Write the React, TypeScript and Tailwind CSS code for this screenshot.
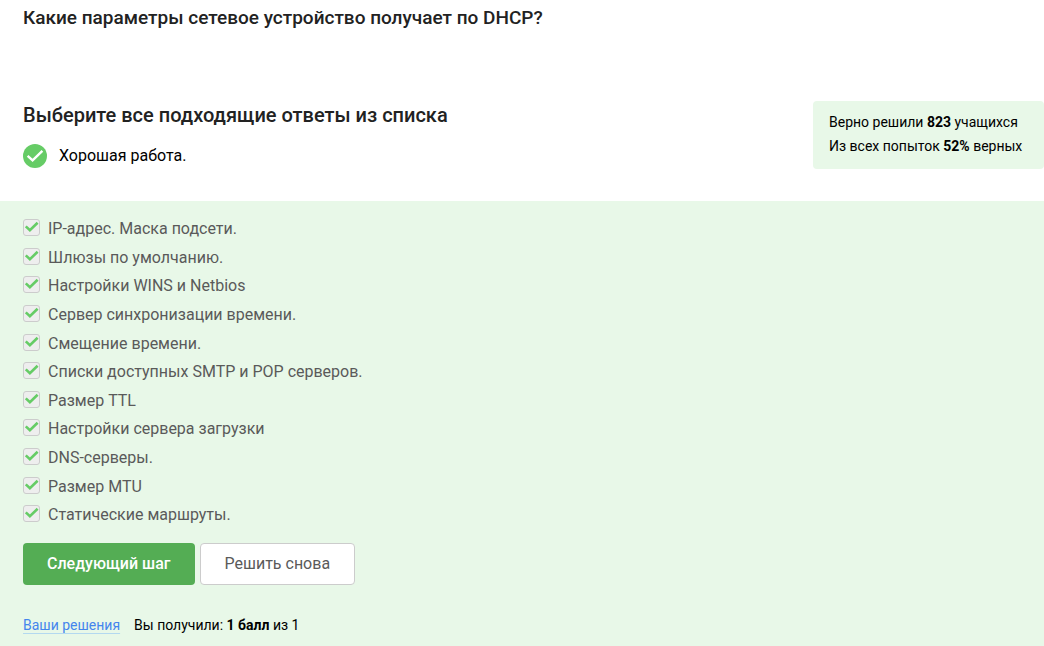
const options: string[] = [
  'IP-адрес. Маска подсети.',
  'Шлюзы по умолчанию.',
  'Настройки WINS и Netbios',
  'Сервер синхронизации времени.',
  'Смещение времени.',
  'Списки доступных SMTP и POP серверов.',
  'Размер TTL',
  'Настройки сервера загрузки',
  'DNS-серверы.',
  'Размер MTU',
  'Статические маршруты.',
];

function Option({ id, label }: { id: string; label: string }) {
  return (
    <li className="flex items-start gap-2">
      <span className="relative mt-1 flex h-[17px] w-[17px] shrink-0">
        <input
          id={id}
          type="checkbox"
          defaultChecked
          disabled
          className="h-full w-full appearance-none rounded-[3px] border border-[#ccc] bg-[#eee]"
        />
        <svg viewBox="0 0 17 17" className="absolute inset-0 h-full w-full" fill="none" aria-hidden="true">
          <path d="M2.8 7.4 6.9 11.3 14.6 3.8" stroke="#66cc66" strokeWidth="2.6" />
        </svg>
      </span>
      <label htmlFor={id} className="text-base leading-7 text-[#5a5a5a]">
        {label}
      </label>
    </li>
  );
}

export default function App() {
  return (
    <main className="flex min-h-screen flex-col bg-white font-[Roboto,sans-serif] text-[#222]">
      <header className="px-[23px] pt-1">
        <h1 className="text-[19px] leading-7 font-medium">Какие параметры сетевое устройство получает по DHCP?</h1>
      </header>

      <section className="mt-[69px] flex justify-between pl-[23px]">
        <div>
          <h2 className="text-xl leading-7 font-medium">Выберите все подходящие ответы из списка</h2>
          <p className="mt-[15px] flex items-center gap-3 text-base leading-6 text-black">
            <svg viewBox="0 0 24 24" className="h-6 w-6" fill="none" aria-hidden="true">
              <circle cx="12" cy="12" r="12" fill="#66cc66" />
              <path d="M4.6 11.8 9.6 16.4 19.4 6.8" stroke="#fff" strokeWidth="2.4" />
            </svg>
            Хорошая работа.
          </p>
        </div>
        <aside className="min-w-[231px] rounded bg-[#e8f8e8] px-4 pt-[9px] pb-[11px] text-sm leading-6 text-black">
          <p>Верно решили <b>823</b> учащихся</p>
          <p>Из всех попыток <b>52%</b> верных</p>
        </aside>
      </section>

      <section className="mt-8 flex-1 bg-[#e8f8e8] px-[23px] pt-[14px]">
        <ul className="grid min-h-[315px] auto-rows-fr">
          {options.map((label, i) => (
            <Option key={label} id={`option-${i}`} label={label} />
          ))}
        </ul>
        <div className="mt-[13px] flex gap-[5px]">
          <button type="button" className="h-[42px] rounded bg-[#54ad54] px-6 text-base font-medium text-white">
            Следующий шаг
          </button>
          <button type="button" className="h-[42px] rounded border border-[#ccc] bg-white px-6 text-base text-[#5a5a5a]">
            Решить снова
          </button>
        </div>
        <footer className="mt-[30px] flex items-start gap-[14px] pb-3 text-sm leading-5 text-black">
          <a
            href="#solutions"
            className="text-[#4485ed] underline decoration-[#b3d9f0] decoration-1 underline-offset-[3px] [text-decoration-skip-ink:none]"
          >
            Ваши решения
          </a>
          <p>Вы получили: <b>1 балл</b> из 1</p>
        </footer>
      </section>
    </main>
  );
}
